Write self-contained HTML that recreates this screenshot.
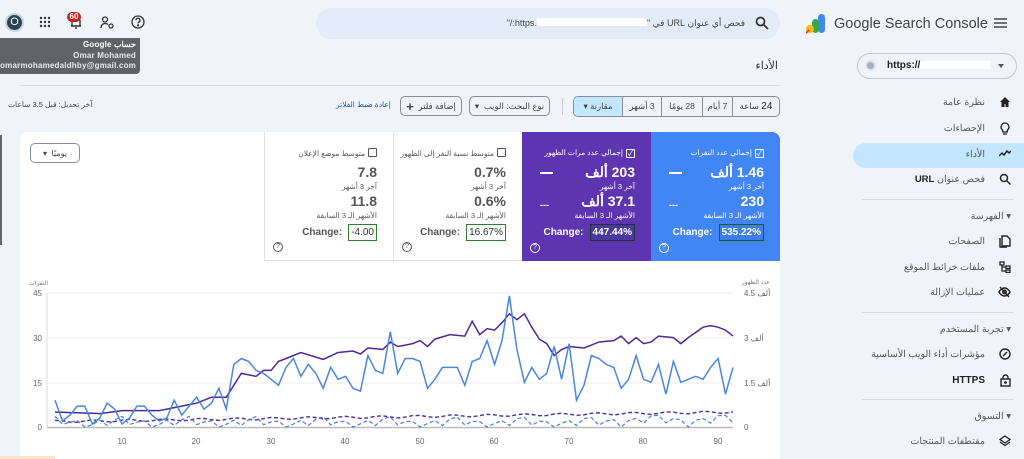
<!DOCTYPE html>
<html><head><meta charset="utf-8">
<style>
*{box-sizing:border-box;margin:0;padding:0}
body{width:1024px;height:459px;overflow:hidden;background:#f0f4f9;font-family:"Liberation Sans","Noto Sans CJK SC",sans-serif;color:#1f1f1f;position:relative}
.a{position:absolute}
.rt{direction:rtl;text-align:right}
.nav{position:absolute;right:0;width:171px;height:25px;font-size:9.5px;color:#555;direction:rtl}
.nav span.t{position:absolute;right:39px;top:6px;white-space:nowrap}
.nav svg{position:absolute;right:13px;top:5px}
.sec{position:absolute;right:0;font-size:9.5px;color:#555;direction:rtl}
.hr{position:absolute;left:862px;width:152px;height:1px;background:#d6d9dd}
.btn{position:absolute;height:20px;border:1px solid #8a8f95;border-radius:5px;font-size:8.5px;color:#444;direction:rtl;display:flex;align-items:center;justify-content:center}
.tile{position:absolute;top:132px;width:129px;height:129px;direction:rtl;font-size:7.5px}
.tile .h{position:absolute;right:16px;top:16px;white-space:nowrap}
.tile .cb{display:inline-block;width:9px;height:9px;border:1px solid currentColor;vertical-align:-1px;margin-left:3px;border-radius:1px;font-size:8px;line-height:7px;text-align:center}
.tile .v1{position:absolute;right:16px;top:32px;font-size:14px;font-weight:bold}
.tile .s1{position:absolute;right:16px;top:50px}
.tile .v2{position:absolute;right:16px;top:61px;font-size:14px;font-weight:bold}
.tile .s2{position:absolute;right:16px;top:79px}
.tile .ch{position:absolute;right:16px;top:92px;font-size:10px;font-weight:bold;direction:ltr;display:flex;align-items:center}
.tile .ch b{margin-left:6px;border:1.5px solid #2e7d32;padding:2px 2px;font-weight:bold}
.tile .q{position:absolute;left:8px;bottom:8px;width:10px;height:10px;border:1px solid currentColor;border-radius:50%;font-size:7px;text-align:center;line-height:8px;direction:ltr}
.ic{position:absolute}
</style></head><body>

<div class="a" style="left:5px;top:13px;width:19px;height:19px;border-radius:50%;background:#2b4556;border:2px solid #c9d3dc;color:#fff;font-size:11px;text-align:center;line-height:15px">O</div>
<svg class="ic" style="left:39px;top:16px" width="12" height="12" viewBox="0 0 12 12" fill="#333"><circle cx="2" cy="2" r="1.2"/><circle cx="6" cy="2" r="1.2"/><circle cx="10" cy="2" r="1.2"/><circle cx="2" cy="6" r="1.2"/><circle cx="6" cy="6" r="1.2"/><circle cx="10" cy="6" r="1.2"/><circle cx="2" cy="10" r="1.2"/><circle cx="6" cy="10" r="1.2"/><circle cx="10" cy="10" r="1.2"/></svg>
<svg class="ic" style="left:69px;top:14px" width="14" height="16" viewBox="0 0 14 16" fill="none" stroke="#333" stroke-width="1.4"><path d="M3 12V7a4 4 0 0 1 8 0v5zM2 12h10M6 14h2"/></svg>
<div class="a" style="left:67px;top:12px;width:14px;height:10px;border-radius:5px;background:#c5221f;color:#fff;font-size:8px;font-weight:bold;text-align:center;line-height:10px">60</div>
<svg class="ic" style="left:100px;top:16px" width="14" height="13" viewBox="0 0 14 13" fill="none" stroke="#333" stroke-width="1.3"><circle cx="5" cy="3.5" r="2.5"/><path d="M1 12c0-3 2-4.5 4-4.5s2.5.5 3 1"/><circle cx="11" cy="10" r="2"/></svg>
<svg class="ic" style="left:131px;top:15px" width="14" height="14" viewBox="0 0 14 14" fill="none" stroke="#333" stroke-width="1.3"><circle cx="7" cy="7" r="6"/><path d="M5 5.3a2 2 0 1 1 2.8 1.8c-.6.3-.8.7-.8 1.4"/><circle cx="7" cy="10.4" r=".5" fill="#333"/></svg>

<div class="a rt" style="left:0;top:38px;width:140px;height:36px;background:#5f6368;border-radius:0 0 4px 0;color:#fff;font-size:8px;line-height:10.5px;padding:2px 4px 0 0;font-weight:bold;letter-spacing:.2px">
<div>حساب Google</div><div style="color:#e8eaed">Omar Mohamed</div><div style="color:#e8eaed">omarmohamedaldhby@gmail.com</div></div>

<div class="a" style="left:316px;top:8px;width:464px;height:31px;border-radius:16px;background:#e3ebf8"></div>
<svg class="ic" style="left:755px;top:16px" width="14" height="14" viewBox="0 0 14 14" fill="none" stroke="#333" stroke-width="1.8"><circle cx="5.5" cy="5.5" r="4"/><path d="M8.5 8.5l4.5 4.5"/></svg>
<div class="a rt" style="right:279px;top:18px;font-size:9px;color:#444;white-space:nowrap">فحص أي عنوان URL في "<span style="display:inline-block;width:110px;height:8px;background:#fff"></span>.https:/"</div>

<svg class="ic" style="left:806px;top:13px" width="20" height="21" viewBox="0 0 20 21"><rect x="12" y="1" width="7" height="19" rx="3.5" fill="#4285f4"/><rect x="6" y="6" width="7" height="14" rx="3.5" fill="#34a853"/><circle cx="4" cy="16" r="4" fill="#fbbc04"/><path d="M0 20l3-3" stroke="#ea4335" stroke-width="2"/></svg>
<div class="a" style="left:834px;top:16px;font-size:14.5px;color:#444;white-space:nowrap">Google Search Console</div>
<svg class="ic" style="left:994px;top:18px" width="13" height="10" viewBox="0 0 13 10" stroke="#444" stroke-width="1.4"><path d="M0 1h13M0 5h13M0 9h13"/></svg>

<div class="a" style="left:857px;top:53px;width:160px;height:26px;border:1px solid #c4c7cc;border-radius:13px"></div>
<div class="a" style="left:865px;top:60px;width:11px;height:11px;border-radius:50%;background:#a8aec9;border:2px solid #dfe3ee"></div>
<div class="a" style="left:887px;top:60px;font-size:10px;font-weight:bold;color:#222">https://<span style="display:inline-block;width:70px;height:8px;background:#fff;vertical-align:middle"></span></div>
<div class="a" style="left:998px;top:64px;width:0;height:0;border-left:3.5px solid transparent;border-right:3.5px solid transparent;border-top:4px solid #555"></div>

<div class="a" style="left:853px;top:143px;width:171px;height:25px;background:#c2e7ff;border-radius:13px 0 0 13px"></div>
<div class="nav" style="top:91px"><span class="t">نظرة عامة</span><svg width="12" height="12" viewBox="0 0 12 12"><path d="M6 1L1 6h1.5v5h3V8h1v3h3V6H11z" fill="#222"/></svg></div>
<div class="nav" style="top:117px"><span class="t">الإحصاءات</span><svg width="12" height="13" viewBox="0 0 12 13" fill="none" stroke="#222" stroke-width="1.3"><path d="M6 1a4 4 0 0 0-2.3 7.2V10h4.6V8.2A4 4 0 0 0 6 1zM4 12h4"/></svg></div>
<div class="nav" style="top:143px"><span class="t">الأداء</span><svg width="12" height="10" viewBox="0 0 12 10" fill="none" stroke="#222" stroke-width="1.5"><path d="M0 8l3-3 2 2 3-4 2 2 2-2"/></svg></div>
<div class="nav" style="top:168px"><span class="t">فحص عنوان <b style="color:#222">URL</b></span><svg width="12" height="12" viewBox="0 0 12 12" fill="none" stroke="#222" stroke-width="1.5"><circle cx="5" cy="5" r="3.5"/><path d="M7.5 7.5l4 4"/></svg></div>
<div class="hr" style="top:199px"></div>
<div class="sec" style="top:211px;right:13px">▾ الفهرسة</div>
<div class="nav" style="top:230px"><span class="t">الصفحات</span><svg width="12" height="13" viewBox="0 0 12 13" fill="none" stroke="#222" stroke-width="1.4"><path d="M3 1h5l3 3v7H3zM1 3v9h7"/></svg></div>
<div class="nav" style="top:256px"><span class="t">ملفات خرائط الموقع</span><svg width="12" height="12" viewBox="0 0 12 12" fill="none" stroke="#222" stroke-width="1.3"><rect x="1" y="1" width="4" height="3"/><rect x="7" y="5" width="4" height="2.5"/><rect x="7" y="9" width="4" height="2.5"/><path d="M3 4v6h4M3 6h4"/></svg></div>
<div class="nav" style="top:281px"><span class="t">عمليات الإزالة</span><svg width="13" height="12" viewBox="0 0 13 12" fill="none" stroke="#222" stroke-width="1.4"><path d="M1 6s2-4 5.5-4S12 6 12 6s-2 4-5.5 4S1 6 1 6z"/><circle cx="6.5" cy="6" r="1.8"/><path d="M2 1l9 10"/></svg></div>
<div class="hr" style="top:312px"></div>
<div class="sec" style="top:324px;right:13px">▾ تجربة المستخدم</div>
<div class="nav" style="top:343px"><span class="t">مؤشرات أداء الويب الأساسية</span><svg width="12" height="12" viewBox="0 0 12 12" fill="none" stroke="#222" stroke-width="1.4"><circle cx="6" cy="6" r="5"/><path d="M4 8l4-4"/></svg></div>
<div class="nav" style="top:369px"><span class="t" style="font-weight:bold;font-size:10px;color:#222">HTTPS</span><svg width="11" height="13" viewBox="0 0 11 13" fill="none" stroke="#222" stroke-width="1.4"><rect x="1" y="5" width="9" height="7"/><path d="M3 5V3.5a2.5 2.5 0 0 1 5 0V5"/><circle cx="5.5" cy="8.5" r=".7" fill="#222"/></svg></div>
<div class="hr" style="top:399px"></div>
<div class="sec" style="top:411px;right:13px">▾ التسوق</div>
<div class="nav" style="top:430px"><span class="t">مقتطفات المنتجات</span><svg width="12" height="12" viewBox="0 0 12 12" fill="none" stroke="#222" stroke-width="1.3"><path d="M6 1l5 3.5L6 8 1 4.5zM1 7l5 3.5L11 7"/></svg></div>

<div class="a rt" style="right:246px;top:59px;font-size:11px;color:#333">الأداء</div>
<div class="a" style="left:20px;top:85px;width:760px;height:1px;background:#dadce0"></div>
<div class="a" style="left:573px;top:96px;width:207px;height:21px;border:1px solid #8a8f95;border-radius:5px;overflow:hidden;display:flex;direction:rtl;font-size:8.5px;color:#444">
<div style="width:47px;text-align:center;line-height:19px;border-left:1px solid #8a8f95"><b style="font-weight:normal;font-size:10px;color:#222">24</b> ساعة</div>
<div style="width:30px;text-align:center;line-height:19px;border-left:1px solid #8a8f95">7 أيام</div>
<div style="width:41px;text-align:center;line-height:19px;border-left:1px solid #8a8f95">28 يومًا</div>
<div style="width:39px;text-align:center;line-height:19px;border-left:1px solid #8a8f95">3 أشهر</div>
<div style="flex:1;text-align:center;line-height:19px;background:#c2e7ff">مقارنة ▾</div></div>
<div class="a" style="left:562px;top:98px;width:1px;height:17px;background:#ccc"></div>
<div class="btn" style="left:469px;top:96px;width:81px">نوع البحث: الويب &nbsp;▾</div>
<div class="btn" style="left:400px;top:96px;width:62px">إضافة فلتر &nbsp;<b style="font-size:13px">+</b></div>
<div class="a rt" style="left:336px;top:100px;font-size:7.5px;color:#1a56b8;white-space:nowrap">إعادة ضبط الفلاتر</div>
<div class="a rt" style="left:8px;top:100px;font-size:7.5px;color:#444;white-space:nowrap">آخر تحديل: قبل 3.5 ساعات</div>

<div class="a" style="left:20px;top:132px;width:760px;height:327px;background:#fff;border-radius:8px 8px 0 0"></div>
<div class="a" style="left:0;top:135px;width:2px;height:110px;background:#666"></div>
<div class="btn" style="left:30px;top:143px;width:50px;font-size:8px">يوميًا &nbsp;▾</div>

<div class="tile" style="left:651px;background:#4285f4;color:#fff;border-radius:0 8px 0 0">
<div class="h"><span class="cb">✓</span>إجمالي عدد النقرات</div>
<div class="v1">1.46 ألف</div><div class="s1">آخر 3 أشهر</div>
<div class="v2">230</div><div class="s2">الأشهر الـ 3 السابقة</div>
<div class="ch">Change: <b style="border-color:#1b5e20;background:#3d7fe6">535.22%</b></div>
<div class="a" style="left:18px;top:40px;width:13px;height:2px;background:#fff"></div>
<div class="a" style="left:18px;top:68px;font-size:9px;font-weight:bold">---</div>
<div class="q">?</div></div>
<div class="tile" style="left:522px;background:#5e35b1;color:#fff">
<div class="h"><span class="cb">✓</span>إجمالي عدد مرات الظهور</div>
<div class="v1">203 ألف</div><div class="s1">آخر 3 أشهر</div>
<div class="v2">37.1 ألف</div><div class="s2">الأشهر الـ 3 السابقة</div>
<div class="ch">Change: <b style="border-color:#263238;background:#4a3aa0">447.44%</b></div>
<div class="a" style="left:18px;top:40px;width:13px;height:2px;background:#fff"></div>
<div class="a" style="left:18px;top:68px;font-size:9px;font-weight:bold">---</div>
<div class="q">?</div></div>
<div class="tile" style="left:393px;color:#555;border-left:1px solid #e0e0e0;border-bottom:1px solid #e0e0e0">
<div class="h"><span class="cb"></span>متوسط نسبة النقر إلى الظهور</div>
<div class="v1">0.7%</div><div class="s1">آخر 3 أشهر</div>
<div class="v2">0.6%</div><div class="s2">الأشهر الـ 3 السابقة</div>
<div class="ch">Change: <b style="font-weight:normal;color:#333">16.67%</b></div>
<div class="q">?</div></div>
<div class="tile" style="left:264px;color:#555;border-left:1px solid #e0e0e0;border-bottom:1px solid #e0e0e0">
<div class="h"><span class="cb"></span>متوسط موضع الإعلان</div>
<div class="v1">7.8</div><div class="s1">آخر 3 أشهر</div>
<div class="v2">11.8</div><div class="s2">الأشهر الـ 3 السابقة</div>
<div class="ch">Change: <b style="font-weight:normal;color:#333">-4.00</b></div>
<div class="q">?</div></div>

<svg class="a" style="left:0;top:0" width="1024" height="459" font-family="Liberation Sans, Noto Sans CJK SC, sans-serif">
<g stroke="#eee" stroke-width="1"><path d="M47 293H733M47 338H733M47 383H733"/></g>
<path d="M47 293V427" stroke="#ddd"/>
<path d="M47 427.5H733" stroke="#bbb" stroke-width="1.5"/>
<g font-size="8" fill="#666" text-anchor="end"><text x="42" y="296">45</text><text x="42" y="341">30</text><text x="42" y="386">15</text><text x="42" y="430">0</text></g>
<text x="48" y="285" font-size="6" fill="#777" text-anchor="end">النقرات</text>
<text x="770" y="284" font-size="6" fill="#777" text-anchor="end">عدد الظهور</text>
<g font-size="8" fill="#666"><text x="744" y="296">ألف 4.5</text><text x="744" y="341">ألف 3</text><text x="744" y="386">ألف 1.5</text><text x="744" y="430">0</text></g>
<g font-size="8" fill="#666" text-anchor="middle"><text x="122" y="444">10</text><text x="196" y="444">20</text><text x="271" y="444">30</text><text x="345" y="444">40</text><text x="420" y="444">50</text><text x="494" y="444">60</text><text x="569" y="444">70</text><text x="643" y="444">80</text><text x="718" y="444">90</text></g>
<path id="pd" fill="none" stroke="#4a2fa0" stroke-width="1.4" stroke-dasharray="4 2.5"/>
<path id="bd" fill="none" stroke="#4a7fd6" stroke-width="1.2" stroke-dasharray="4 2.5"/>
<path id="ps" fill="none" stroke="#4b2a96" stroke-width="1.5"/>
<path id="bs" fill="none" stroke="#4a86df" stroke-width="1.5"/>
</svg>
<div class="a" style="left:0;top:456px;width:55px;height:3px;background:#fde3c8"></div>

<script>
var B=[9,2,4,7,7,1,3,8,6,1,3,7,7,4,2,3,9,4,7,10,6,8,13,6,21,23,22,19,18,16,14,20,23,17,21,18,13,20,16,17,13,12,24,19,18,32,18,23,23,22,13,16,20,20,20,14,22,23,29,21,29,44,26,15,20,16,18,27,16,28,9,14,24,23,21,20,13,16,24,16,15,21,11,22,15,16,17,16,20,23,11,20];
var K=[[1,5],[7,4.5],[10,5.5],[15,5.5],[18,7],[20,8],[22,10],[24,10],[26,18],[28,17],[29,19],[30,19],[31,22],[34,25],[37,22.7],[39,25],[41,25.5],[42,24.5],[43,26.5],[45,26],[46,28.5],[47,27],[49,28],[50,29],[51,27],[52,29.5],[54,31],[56,30.5],[57,35.5],[58,31],[59,33],[60,32.5],[61,35],[62,38],[63,36],[64,38],[65,33.5],[66,29.5],[67,28],[68,24],[69,26],[70,27],[72,26.5],[74,28.5],[76,29],[77,30.5],[78,28],[79,30],[80,28],[81,28.5],[82,30.5],[84,30],[85,28],[86,30],[88,33.5],[89,34],[90,33.5],[91,32.5],[92,30.5]];
function X(d){return 55+(d-1)*7.45}function Y(v){return 427-v*2.98}
function path(f){var s="";for(var d=1;d<=92;d++){s+=(d==1?"M":"L")+X(d).toFixed(1)+" "+Y(f(d)).toFixed(1)}return s}
function interp(d){for(var i=0;i<K.length-1;i++){if(d>=K[i][0]&&d<=K[i+1][0]){var t=(d-K[i][0])/(K[i+1][0]-K[i][0]);return K[i][1]+t*(K[i+1][1]-K[i][1])}}return 30}
document.getElementById('bs').setAttribute('d',path(function(d){return B[d-1]}));
document.getElementById('ps').setAttribute('d',path(interp));
document.getElementById('pd').setAttribute('d',path(function(d){return 1.8+d*0.035+0.4*Math.sin(d*1.3)}));
document.getElementById('bd').setAttribute('d',path(function(d){var v=1.5+1.4*Math.sin(d*2.1)+0.9*Math.sin(d*0.7+1);if(d>75)v+=0.8;return Math.max(0,v)}));
</script>
</body></html>
